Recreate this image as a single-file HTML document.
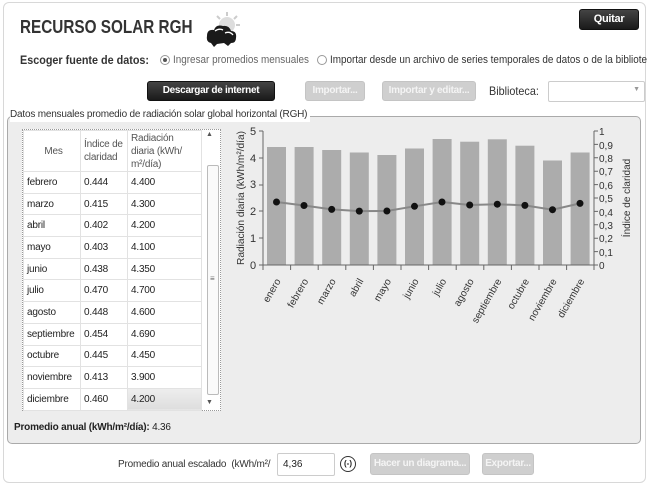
<!DOCTYPE html>
<html><head><meta charset="utf-8"><style>
*{margin:0;padding:0;box-sizing:border-box}
body{width:650px;height:487px;background:#fff;font-family:"Liberation Sans",sans-serif;position:relative;overflow:hidden;color:#222}
.a{position:absolute;white-space:nowrap}
.n{transform-origin:left center;display:inline-block}
.btn{position:absolute;border-radius:3px;text-align:center;font-size:10px;font-weight:bold;color:#fff;white-space:nowrap;letter-spacing:-0.3px}
.dark{background:linear-gradient(#444,#1a1a1a);border:1px solid #111}
.dis{background:#cfcfcf;border:1px solid #c4c4c4;color:#f4f4f4}
table{border-collapse:collapse;font-size:10px;position:absolute;left:23px;top:130px;background:#fff;letter-spacing:-0.2px}
td{border:1px solid #e2e2e2;height:21.7px;padding-left:3px;color:#222;white-space:nowrap}
</style></head><body>
<div class="a" style="left:3px;top:2px;width:643px;height:481px;border:1px solid #d8d8d8;border-radius:6px"></div>
<div class="a" style="left:20px;top:17px;font-size:18px;font-weight:bold;color:#333"><span class="n" style="transform:scaleX(0.85)">RECURSO SOLAR RGH</span></div>
<svg class="a" style="left:203px;top:10px" width="40" height="40" viewBox="0 0 40 40">
<circle cx="24" cy="15" r="8" fill="#ddd"/><g stroke="#ccc" stroke-width="2"><line x1="24" y1="2" x2="24" y2="6"/><line x1="34" y1="6" x2="31" y2="9"/><line x1="37" y1="15" x2="33" y2="15"/><line x1="14" y1="6" x2="17" y2="9"/></g>
<path d="M4 26 Q4 19 11 20 Q13 14 20 16 Q26 15 28 21 Q34 21 33 28 Q33 33 28 33 L25 36 L21 33 L14 34 L11 37 L8 33 Q3 32 4 26Z" fill="#1a1a1a"/>
<path d="M12 21 Q16 18 20 20" stroke="#fff" stroke-width="1.3" fill="none"/><path d="M22 23 Q27 21 30 25" stroke="#fff" stroke-width="1.3" fill="none"/></svg>
<div class="btn dark" style="left:579px;top:9px;width:60px;height:21px;line-height:19px;font-size:11px">Quitar</div>
<div class="a" style="left:20px;top:53px;font-size:12px;font-weight:bold;color:#333"><span class="n" style="transform:scaleX(0.9)">Escoger fuente de datos:</span></div>
<div class="a" style="left:160px;top:55px;width:10px;height:10px;border:1px solid #999;border-radius:50%"><div style="margin:2px;width:4px;height:4px;border-radius:50%;background:#555"></div></div>
<div class="a" style="left:173px;top:54px;font-size:11px;color:#666"><span class="n" style="transform:scaleX(0.9)">Ingresar promedios mensuales</span></div>
<div class="a" style="left:317px;top:55px;width:10px;height:10px;border:1px solid #999;border-radius:50%"></div>
<div class="a" style="left:330px;top:54px;font-size:11px;color:#333"><span class="n" style="transform:scaleX(0.9)">Importar desde un archivo de series temporales de datos o de la bibliote</span></div>
<div class="btn dark" style="left:147px;top:81px;width:128px;height:20px;line-height:18px">Descargar de internet</div>
<div class="btn dis" style="left:305px;top:81px;width:60px;height:20px;line-height:18px">Importar...</div>
<div class="btn dis" style="left:382px;top:81px;width:94px;height:20px;line-height:18px">Importar y editar...</div>
<div class="a" style="left:489px;top:84px;font-size:12px;color:#333"><span class="n" style="transform:scaleX(0.9)">Biblioteca:</span></div>
<div class="a" style="left:548px;top:81px;width:97px;height:21px;border:1px solid #ccc;border-radius:2px"><span style="position:absolute;right:4px;top:4px;font-size:7px;color:#999">▼</span></div>
<div class="a" style="left:7px;top:116px;width:634px;height:328px;background:#ededed;border:1px solid #aaa;border-radius:5px"></div>
<div class="a" style="left:10px;top:108px;font-size:10px;color:#333;background:#fff;padding:0 3px 0 0;line-height:14px;letter-spacing:-0.2px">Datos mensuales promedio de radiación solar global horizontal (RGH)</div>
<div class="a" style="left:22px;top:129px;width:199px;height:282px;border:1px dotted #999;background:#fff"></div>
<table>
<tr><td style="width:57px;height:41px;text-align:center;color:#555">Mes</td><td style="width:47px;color:#555;line-height:13px">Índice de<br>claridad</td><td style="width:74px;color:#555;line-height:13px">Radiación<br>diaria (kWh/<br>m²/día)</td></tr>
<tr><td>febrero</td><td>0.444</td><td>4.400</td></tr>
<tr><td>marzo</td><td>0.415</td><td>4.300</td></tr>
<tr><td>abril</td><td>0.402</td><td>4.200</td></tr>
<tr><td>mayo</td><td>0.403</td><td>4.100</td></tr>
<tr><td>junio</td><td>0.438</td><td>4.350</td></tr>
<tr><td>julio</td><td>0.470</td><td>4.700</td></tr>
<tr><td>agosto</td><td>0.448</td><td>4.600</td></tr>
<tr><td>septiembre</td><td>0.454</td><td>4.690</td></tr>
<tr><td>octubre</td><td>0.445</td><td>4.450</td></tr>
<tr><td>noviembre</td><td>0.413</td><td>3.900</td></tr>
<tr><td>diciembre</td><td>0.460</td><td style="background:linear-gradient(#eee,#ddd)">4.200</td></tr>
</table>
<div class="a" style="left:206px;top:131px;font-size:7px;color:#555">▲</div>
<div class="a" style="left:207px;top:165px;width:12px;height:230px;border:1px solid #bbb;border-radius:2px;background:#fafafa"><div style="position:absolute;top:110px;left:2px;font-size:8px;line-height:6px;color:#666">≡</div></div>
<div class="a" style="left:206px;top:399px;font-size:7px;color:#555">▼</div>
<svg class="a" style="left:0;top:0" width="650" height="450">
<g font-family="Liberation Sans" font-size="11" fill="#333">
<text x="250" y="269">0</text><text x="250" y="242">1</text><text x="250" y="215">2</text><text x="250" y="188">3</text><text x="250" y="162">4</text><text x="250" y="135">5</text>
</g>
<text transform="translate(244,198) rotate(-90)" text-anchor="middle" font-family="Liberation Sans" font-size="10" fill="#333" textLength="134" lengthAdjust="spacingAndGlyphs">Radiación diaria (kWh/m²/día)</text>
<text transform="translate(630,198) rotate(-90)" text-anchor="middle" font-family="Liberation Sans" font-size="10" fill="#333">Índice de claridad</text>
<g font-family="Liberation Sans" font-size="10" fill="#333">
<text x="599" y="135">1</text><text x="599" y="149">0,9</text><text x="599" y="162">0,8</text><text x="599" y="175">0,7</text><text x="599" y="189">0,6</text><text x="599" y="202">0,5</text><text x="599" y="216">0,4</text><text x="599" y="229">0,3</text><text x="599" y="242">0,2</text><text x="599" y="256">0,1</text><text x="599" y="269">0</text>
</g>
<g fill="#acacac">
<rect x="267" y="147" width="19" height="118"/><rect x="294.6" y="147" width="19" height="118"/><rect x="322.2" y="150" width="19" height="115"/><rect x="349.8" y="152.5" width="19" height="112.5"/><rect x="377.4" y="155" width="19" height="110"/><rect x="405" y="148.5" width="19" height="116.5"/><rect x="432.6" y="139" width="19" height="126"/><rect x="460.2" y="141.7" width="19" height="123.3"/><rect x="487.8" y="139.3" width="19" height="125.7"/><rect x="515.4" y="145.7" width="19" height="119.3"/><rect x="543" y="160.5" width="19" height="104.5"/><rect x="570.6" y="152.5" width="19" height="112.5"/>
</g>
<g stroke="#666" stroke-width="1" fill="none">
<path d="M263 131V265H594V131"/>
<path d="M259 131h4M259 158h4M259 185h4M259 211h4M259 238h4M259 265h4"/>
<path d="M594 131h4M594 144.4h4M594 157.8h4M594 171.2h4M594 184.6h4M594 198h4M594 211.4h4M594 224.8h4M594 238.2h4M594 251.6h4M594 265h4"/>
<path d="M263 265v5M290.6 265v5M318.2 265v5M345.8 265v5M373.4 265v5M401 265v5M428.6 265v5M456.2 265v5M483.8 265v5M511.4 265v5M539 265v5M566.6 265v5M594 265v5"/>
</g>
<polyline fill="none" stroke="#888" stroke-width="2" points="276.5,202 304,205.5 331.7,209.4 359.3,211.1 386.9,211 414.5,206.3 442,202 469.7,205 497.3,204.2 524.9,205.4 552.5,209.7 580,203.4"/>
<g fill="#111">
<circle cx="276.5" cy="202" r="3.5"/><circle cx="304" cy="205.5" r="3.5"/><circle cx="331.7" cy="209.4" r="3.5"/><circle cx="359.3" cy="211.1" r="3.5"/><circle cx="386.9" cy="211" r="3.5"/><circle cx="414.5" cy="206.3" r="3.5"/><circle cx="442" cy="202" r="3.5"/><circle cx="469.7" cy="205" r="3.5"/><circle cx="497.3" cy="204.2" r="3.5"/><circle cx="524.9" cy="205.4" r="3.5"/><circle cx="552.5" cy="209.7" r="3.5"/><circle cx="580" cy="203.4" r="3.5"/>
</g>
<g font-family="Liberation Sans" font-size="10" fill="#333" text-anchor="end">
<text transform="translate(281,281) rotate(-60)">enero</text><text transform="translate(308.6,281) rotate(-60)">febrero</text><text transform="translate(336.2,281) rotate(-60)">marzo</text><text transform="translate(363.8,281) rotate(-60)">abril</text><text transform="translate(391.4,281) rotate(-60)">mayo</text><text transform="translate(419,281) rotate(-60)">junio</text><text transform="translate(446.6,281) rotate(-60)">julio</text><text transform="translate(474.2,281) rotate(-60)">agosto</text><text transform="translate(501.8,281) rotate(-60)">septiembre</text><text transform="translate(529.4,281) rotate(-60)">octubre</text><text transform="translate(557,281) rotate(-60)">noviembre</text><text transform="translate(584.6,281) rotate(-60)">diciembre</text>
</g>
</svg>
<div class="a" style="left:14px;top:422px;font-size:10px;color:#222;letter-spacing:-0.2px"><b>Promedio anual (kWh/m²/día):</b> 4.36</div>
<div class="a" style="left:118px;top:459px;font-size:10px;color:#333;letter-spacing:-0.2px">Promedio anual escalado&nbsp; (kWh/m²/</div>
<div class="a" style="left:277px;top:453px;width:58px;height:23px;border:1px solid #ccc;border-radius:2px;font-size:10px;padding:5px 0 0 5px">4,36</div>
<div class="a" style="left:340px;top:456px;width:16px;height:16px;border:1.5px solid #333;border-radius:50%;font-size:8px;text-align:center;line-height:13px;font-weight:bold">(-)</div>
<div class="btn dis" style="left:370px;top:453px;width:100px;height:22px;line-height:20px">Hacer un diagrama...</div>
<div class="btn dis" style="left:482px;top:453px;width:52px;height:22px;line-height:20px">Exportar...</div>
</body></html>
